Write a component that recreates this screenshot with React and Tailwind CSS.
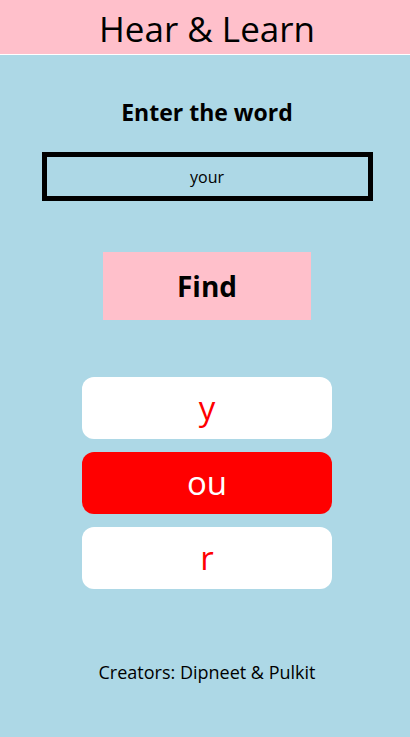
import { useState } from "react";

const parts = [
  { text: "y", active: false },
  { text: "ou", active: true },
  { text: "r", active: false },
];

function App() {
  const [word, setWord] = useState("your");

  return (
    <div
      className="min-h-screen flex flex-col bg-[#add8e6] text-black"
      style={{ fontFamily: '"Open Sans", "Noto Sans", sans-serif' }}
    >
      <header className="h-[55px] pl-[4px] pt-[3px] bg-[#ffc0cb] border-b border-white flex items-center justify-center">
        <h1 className="text-[35px] leading-none font-normal">Hear &amp; Learn</h1>
      </header>

      <main className="pl-[4px] flex flex-col items-center">
        <h2 className="mt-[40px] h-[34px] flex items-center text-[23px] font-bold">Enter the word</h2>

        <input
          value={word}
          onChange={(e) => setWord(e.target.value)}
          className="mt-[23px] w-[331px] h-[49px] border-[5px] border-black bg-transparent text-center text-[16px] outline-none"
        />

        <button className="mt-[51px] w-[208px] h-[68px] bg-[#ffc0cb] text-[28px] font-bold">
          Find
        </button>

        <div className="mt-[57px] flex flex-col gap-[13px]">
          {parts.map((item) => (
            <div
              key={item.text}
              className={`w-[250px] h-[62px] rounded-[12px] flex items-center justify-center text-[33px] ${
                item.active ? "bg-[#ff0000] text-white" : "bg-white text-[#ff0000]"
              }`}
            >
              {item.text}
            </div>
          ))}
        </div>

        <p className="mt-[70px] text-[18px]">Creators: Dipneet &amp; Pulkit</p>
      </main>
    </div>
  );
}

export default App;
